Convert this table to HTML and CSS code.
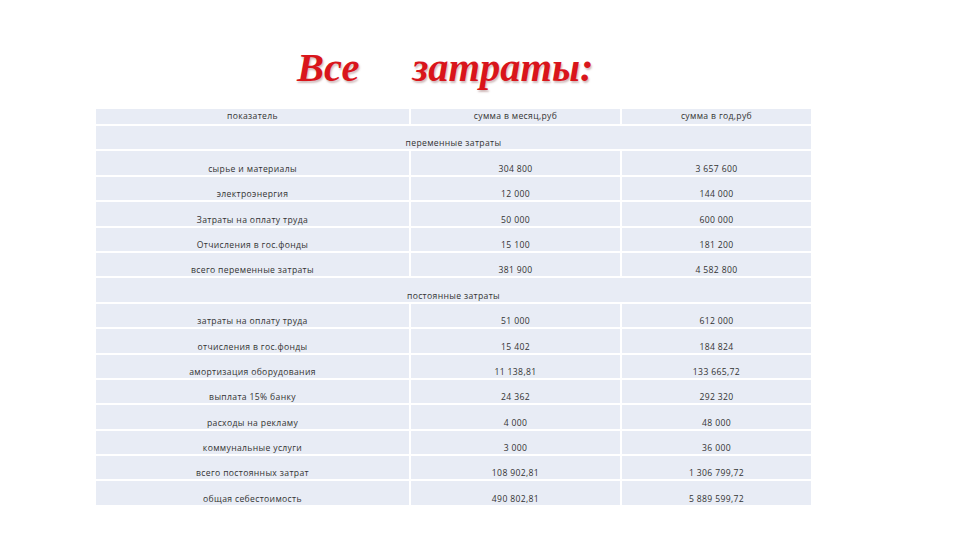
FILE: index.html
```html
<!DOCTYPE html>
<html lang="ru">
<head>
<meta charset="utf-8">
<link rel="stylesheet" href="styles.css">
</head>
<body>
<div class="slide">
  <h1 class="title"><span class="w1">Все</span><span class="w2">затраты:</span></h1>
  <table class="costs">
    <colgroup><col class="c1"><col class="c2"><col class="c3"></colgroup>
    <tr class="head"><td>показатель</td><td>сумма в месяц,руб</td><td>сумма в год,руб</td></tr>
    <tr><td colspan="3">переменные затраты</td></tr>
    <tr><td>сырье и материалы</td><td>304 800</td><td>3 657 600</td></tr>
    <tr><td>электроэнергия</td><td>12 000</td><td>144 000</td></tr>
    <tr><td>Затраты на оплату труда</td><td>50 000</td><td>600 000</td></tr>
    <tr><td>Отчисления в гос.фонды</td><td>15 100</td><td>181 200</td></tr>
    <tr><td>всего переменные затраты</td><td>381 900</td><td>4 582 800</td></tr>
    <tr><td colspan="3">постоянные затраты</td></tr>
    <tr><td>затраты на оплату труда</td><td>51 000</td><td>612 000</td></tr>
    <tr><td>отчисления в гос.фонды</td><td>15 402</td><td>184 824</td></tr>
    <tr><td>амортизация оборудования</td><td>11 138,81</td><td>133 665,72</td></tr>
    <tr><td>выплата 15% банку</td><td>24 362</td><td>292 320</td></tr>
    <tr><td>расходы на рекламу</td><td>4 000</td><td>48 000</td></tr>
    <tr><td>коммунальные услуги</td><td>3 000</td><td>36 000</td></tr>
    <tr><td>всего постоянных затрат</td><td>108 902,81</td><td>1 306 799,72</td></tr>
    <tr><td>общая себестоимость</td><td>490 802,81</td><td>5 889 599,72</td></tr>
  </table>
</div>
</body>
</html>
```
FILE: styles.css
```css
html, body {
  margin: 0;
  padding: 0;
  background: #ffffff;
}
.slide {
  width: 960px;
  height: 540px;
  position: relative;
  overflow: hidden;
}
.title {
  margin: 0;
  padding: 44px 0 0 297px;
  height: 63px;
  font-family: "Liberation Serif", "Times New Roman", serif;
  font-style: italic;
  font-weight: bold;
  font-size: 40.5px;
  line-height: 48px;
  color: #d9151b;
  text-shadow: 1px 2px 2px rgba(120, 60, 60, 0.35);
  white-space: nowrap;
}
.w2 {
  margin-left: 53px;
}
.costs {
  margin-left: 94px;
  border-collapse: separate;
  border-spacing: 2px;
  font-family: "Open Sans", "Liberation Sans", Arial, sans-serif;
  font-size: 8.6px;
  letter-spacing: 0.35px;
  color: #333333;
  table-layout: fixed;
  width: 719px;
}
.c1 { width: 313px; }
.c2 { width: 209px; }
.c3 { width: 189px; }
.costs td {
  background: #e8ecf5;
  text-align: center;
  vertical-align: bottom;
  height: 23.4px;
  padding: 0;
  line-height: 11px;
  white-space: nowrap;
}
.costs tr.head td {
  height: 15px;
  vertical-align: middle;
  padding: 0;
}
```
